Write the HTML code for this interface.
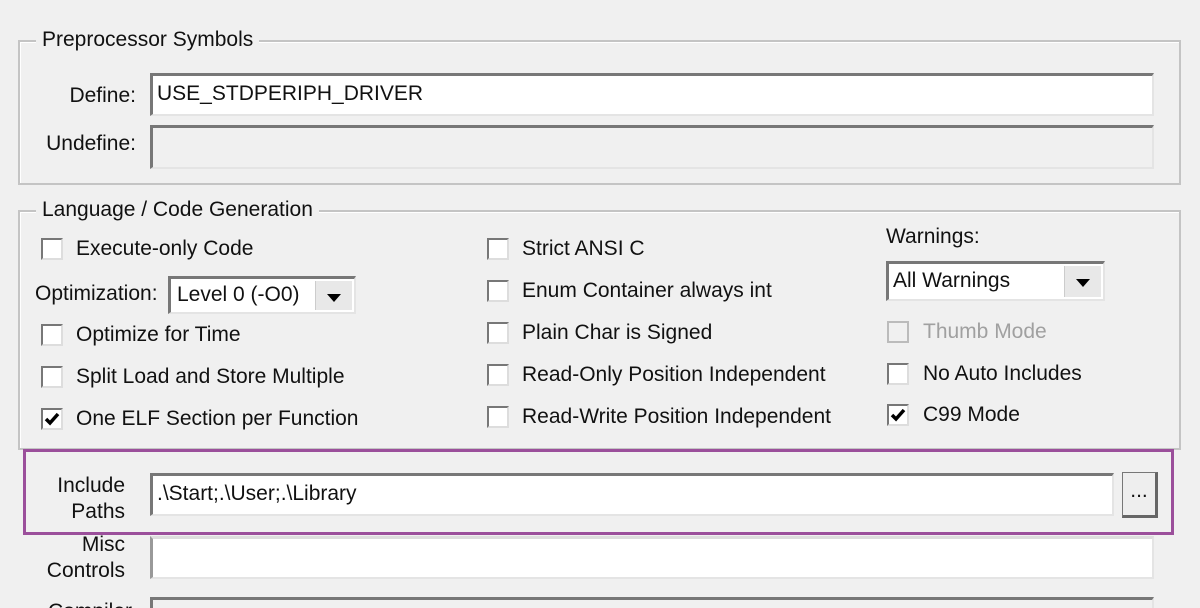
<!DOCTYPE html>
<html><head><meta charset="utf-8"><style>
html,body{margin:0;width:1200px;height:608px;overflow:hidden}
body{background:#f0f0f0;font-family:"Liberation Sans",sans-serif;font-size:21px;color:#111;position:relative}
.a{position:absolute;white-space:nowrap}
.grp{position:absolute;border:2px solid #c4c4c4;box-shadow:inset 1px 1px 0 #fff}
.leg{position:absolute;background:#f0f0f0;padding:0 6px;line-height:24px}
.inp{position:absolute;background:#fff;border-top:3px solid #777;border-left:3px solid #777;border-right:2px solid #e4e4e4;border-bottom:2px solid #e4e4e4;box-sizing:border-box;line-height:36px;padding-left:4px}
.cb{position:absolute;width:22px;height:22px;box-sizing:border-box;background:#fff;border-top:2px solid #777;border-left:2px solid #777;border-right:2px solid #ddd;border-bottom:2px solid #ddd}
.cb.d{background:#f0f0f0;border-color:#bbb}
.lab{position:absolute;line-height:24px;white-space:nowrap}
.dd{position:absolute;width:36px;top:2px;bottom:2px;right:2px;background:#e8e8e8;border-left:1px solid #ccc}
.dd:after{content:"";position:absolute;left:11px;top:13px;border-left:7px solid transparent;border-right:7px solid transparent;border-top:8px solid #000}
.ck{position:absolute;left:1px;top:1px}
</style></head><body>
<div class="grp" style="left:18px;top:40px;width:1159px;height:141px"></div>
<div class="leg" style="left:36px;top:28px">Preprocessor Symbols</div>
<div class="a" style="right:1064px;top:82px;line-height:28px">Define:</div>
<div class="inp" style="left:150px;top:73px;width:1004px;height:43px">USE_STDPERIPH_DRIVER</div>
<div class="a" style="right:1064px;top:130px;line-height:28px">Undefine:</div>
<div class="inp" style="left:150px;top:125px;width:1004px;height:44px;background:#f0f0f0"></div>

<div class="grp" style="left:18px;top:210px;width:1159px;height:236px"></div>
<div class="leg" style="left:36px;top:198px">Language / Code Generation</div>

<div class="cb" style="left:41px;top:238px"></div><div class="lab" style="left:76px;top:237px">Execute-only Code</div>
<div class="a" style="left:35px;top:282px;line-height:24px">Optimization:</div>
<div class="inp" style="left:168px;top:276px;width:188px;height:38px;line-height:32px;padding-left:6px">Level 0 (-O0)<div class="dd"></div></div>
<div class="cb" style="left:41px;top:324px"></div><div class="lab" style="left:76px;top:323px">Optimize for Time</div>
<div class="cb" style="left:41px;top:366px"></div><div class="lab" style="left:76px;top:365px">Split Load and Store Multiple</div>
<div class="cb" style="left:41px;top:408px"><svg class="ck" width="16" height="16"><path d="M2 8 L6 12 L14 3" stroke="#000" stroke-width="3.5" fill="none"/></svg></div><div class="lab" style="left:76px;top:407px">One ELF Section per Function</div>

<div class="cb" style="left:487px;top:238px"></div><div class="lab" style="left:522px;top:237px">Strict ANSI C</div>
<div class="cb" style="left:487px;top:280px"></div><div class="lab" style="left:522px;top:279px">Enum Container always int</div>
<div class="cb" style="left:487px;top:322px"></div><div class="lab" style="left:522px;top:321px">Plain Char is Signed</div>
<div class="cb" style="left:487px;top:364px"></div><div class="lab" style="left:522px;top:363px">Read-Only Position Independent</div>
<div class="cb" style="left:487px;top:406px"></div><div class="lab" style="left:522px;top:405px">Read-Write Position Independent</div>

<div class="a" style="left:886px;top:225px;line-height:24px">Warnings:</div>
<div class="inp" style="left:886px;top:261px;width:219px;height:40px;line-height:34px;padding-left:4px">All Warnings<div class="dd"></div></div>
<div class="cb d" style="left:887px;top:321px"></div><div class="lab" style="left:923px;top:320px;color:#a0a0a0">Thumb Mode</div>
<div class="cb" style="left:887px;top:363px"></div><div class="lab" style="left:923px;top:362px">No Auto Includes</div>
<div class="cb" style="left:887px;top:404px"><svg class="ck" width="16" height="16"><path d="M2 8 L6 12 L14 3" stroke="#000" stroke-width="3.5" fill="none"/></svg></div><div class="lab" style="left:923px;top:403px">C99 Mode</div>

<div class="a" style="right:1075px;top:473px;line-height:26px;text-align:right">Include<br>Paths</div>
<div class="inp" style="left:150px;top:473px;width:964px;height:43px">.\Start;.\User;.\Library</div>
<div class="a" style="left:1122px;top:472px;width:36px;height:46px;box-sizing:border-box;background:#eee;border:1px solid #777;border-right:3px solid #666;border-bottom:3px solid #666;text-align:center;line-height:36px">...</div>
<div class="a" style="left:23px;top:449px;width:1151px;height:86px;box-sizing:border-box;border:3px solid #9b4f9b"></div>

<div class="a" style="right:1075px;top:532px;line-height:26px;text-align:right">Misc<br>Controls</div>
<div class="inp" style="left:150px;top:536px;width:1004px;height:43px;border-top-color:#ddd;border-left-color:#999"></div>
<div class="a" style="left:48px;top:600px;line-height:24px">Compiler</div>
<div class="inp" style="left:150px;top:597px;width:1004px;height:30px;background:#f0f0f0"></div>
</body></html>
